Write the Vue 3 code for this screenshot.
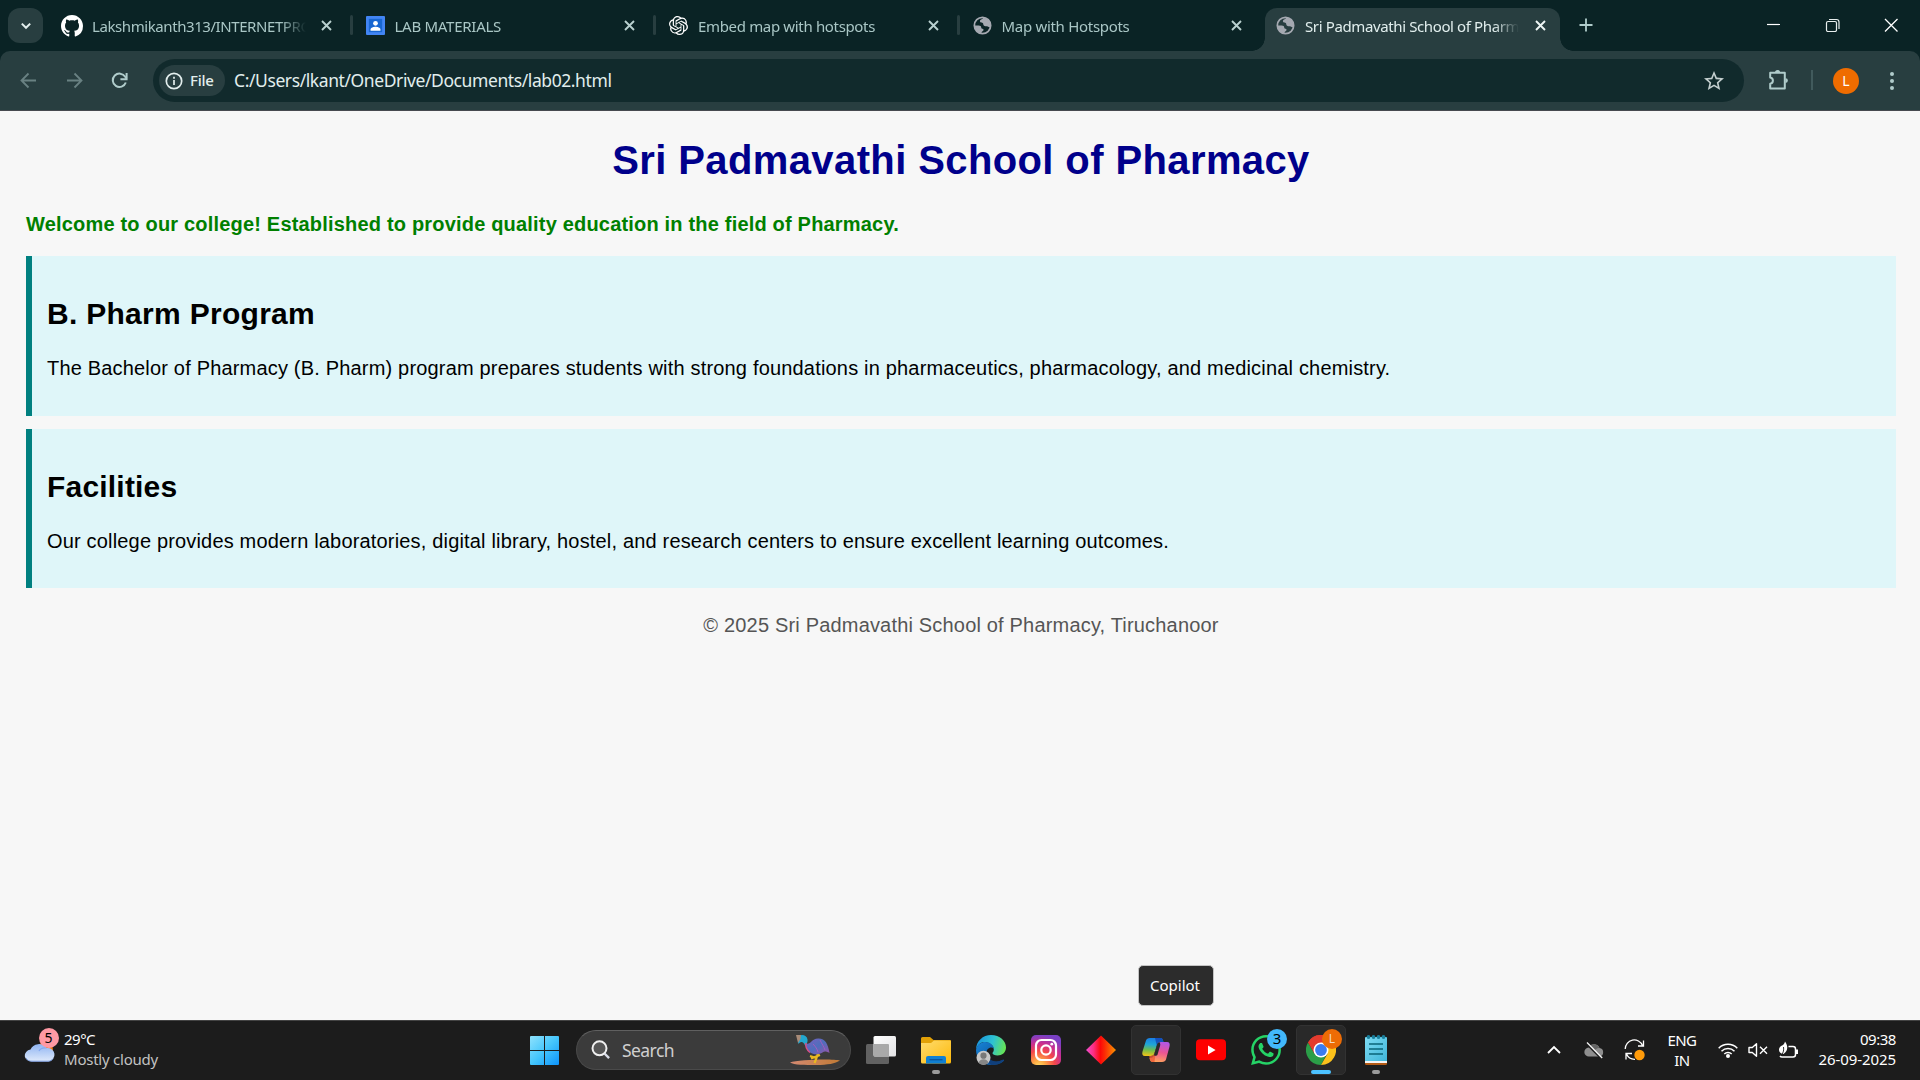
<script setup>
const tabs = [
  { title: 'Lakshmikanth313/INTERNETPROG', icon: 'github', ls: '-0.42px' },
  { title: 'LAB MATERIALS', icon: 'lab', ls: '-0.27px' },
  { title: 'Embed map with hotspots', icon: 'openai', ls: '-0.34px' },
  { title: 'Map with Hotspots', icon: 'globe', ls: '-0.3px' },
  { title: 'Sri Padmavathi School of Pharmacy', icon: 'globe', ls: '-0.38px', active: true },
]
const sections = [
  {
    title: 'B. Pharm Program',
    ls: '0.29px',
    text: 'The Bachelor of Pharmacy (B. Pharm) program prepares students with strong foundations in pharmaceutics, pharmacology, and medicinal chemistry.',
  },
  {
    title: 'Facilities',
    ls: '0.2px',
    text: 'Our college provides modern laboratories, digital library, hostel, and research centers to ensure excellent learning outcomes.',
  },
]
</script>

<template>
  <div class="screen">
    <header class="tabstrip">
      <div class="tab-search">
        <svg width="12" height="12" viewBox="0 0 12 12"><path d="M1.8 3.6 6 7.8l4.2-4.2" fill="none" stroke="#e3eeed" stroke-width="2" /></svg>
      </div>
      <div class="tabs">
        <div v-for="(t, i) in tabs" :key="i" class="tab" :class="{ active: t.active, sep: i < 3 }">
          <svg v-if="t.icon === 'github'" class="fav gh" viewBox="0 0 16 16"><path fill="#fff" d="M8 0C3.58 0 0 3.58 0 8c0 3.54 2.29 6.53 5.47 7.59.4.07.55-.17.55-.38 0-.19-.01-.82-.01-1.49-2.01.37-2.53-.49-2.69-.94-.09-.23-.48-.94-.82-1.13-.28-.15-.68-.52-.01-.53.63-.01 1.08.58 1.23.82.72 1.21 1.87.87 2.33.66.07-.52.28-.87.51-1.07-1.78-.2-3.64-.89-3.64-3.95 0-.87.31-1.59.82-2.15-.08-.2-.36-1.02.08-2.12 0 0 .67-.21 2.2.82.64-.18 1.32-.27 2-.27s1.36.09 2 .27c1.53-1.04 2.2-.82 2.2-.82.44 1.1.16 1.92.08 2.12.51.56.82 1.27.82 2.15 0 3.07-1.87 3.75-3.65 3.95.29.25.54.73.54 1.48 0 1.07-.01 1.93-.01 2.2 0 .21.15.46.55.38A8.01 8.01 0 0 0 16 8c0-4.42-3.58-8-8-8z" /></svg>
          <svg v-else-if="t.icon === 'lab'" class="fav" viewBox="0 0 20 20"><rect width="20" height="20" rx="1" fill="#4285f4" /><rect x="3" y="3" width="14" height="14" fill="#1967d2" /><circle cx="10" cy="7.7" r="2.5" fill="#fff" /><path d="M4.8 15.6v-1.3c0-2 3.4-2.9 5.200-2.900s5.200.9 5.200 2.900v1.300z" fill="#fff" /></svg>
          <svg v-else-if="t.icon === 'openai'" class="fav oa" viewBox="0 0 24 24"><path fill="#fff" d="M22.2819 9.8211a5.9847 5.9847 0 0 0-.5157-4.9108 6.0462 6.0462 0 0 0-6.5098-2.9A6.0651 6.0651 0 0 0 4.9807 4.1818a5.9847 5.9847 0 0 0-3.9977 2.9 6.0462 6.0462 0 0 0 .7427 7.0966 5.98 5.98 0 0 0 .511 4.9107 6.051 6.051 0 0 0 6.5146 2.9001A5.9847 5.9847 0 0 0 13.2599 24a6.0557 6.0557 0 0 0 5.7718-4.2058 5.9894 5.9894 0 0 0 3.9977-2.9001 6.0557 6.0557 0 0 0-.7475-7.073zm-9.022 12.6081a4.4755 4.4755 0 0 1-2.8764-1.0408l.1419-.0804 4.7783-2.7582a.7948.7948 0 0 0 .3927-.6813v-6.7369l2.02 1.1686a.071.071 0 0 1 .038.052v5.5826a4.504 4.504 0 0 1-4.4945 4.4944zm-9.6607-4.1254a4.4708 4.4708 0 0 1-.5346-3.0137l.142.0852 4.783 2.7582a.7712.7712 0 0 0 .7806 0l5.8428-3.3685v2.3324a.0804.0804 0 0 1-.0332.0615L9.74 19.9502a4.4992 4.4992 0 0 1-6.1408-1.6464zM2.3408 7.8956a4.485 4.485 0 0 1 2.3655-1.9728V11.6a.7664.7664 0 0 0 .3879.6765l5.8144 3.3543-2.0201 1.1685a.0757.0757 0 0 1-.071 0l-4.8303-2.7865A4.504 4.504 0 0 1 2.3408 7.872zm16.5963 3.8558L13.1038 8.364 15.1192 7.2a.0757.0757 0 0 1 .071 0l4.8303 2.7913a4.4944 4.4944 0 0 1-.6765 8.1042v-5.6772a.79.79 0 0 0-.407-.667zm2.0107-3.0231l-.142-.0852-4.7735-2.7818a.7759.7759 0 0 0-.7854 0L9.409 9.2297V6.8974a.0662.0662 0 0 1 .0284-.0615l4.8303-2.7866a4.4992 4.4992 0 0 1 6.6802 4.66zM8.3065 12.863l-2.02-1.1638a.0804.0804 0 0 1-.038-.0567V6.0742a4.4992 4.4992 0 0 1 7.3757-3.4537l-.142.0805L8.704 5.459a.7948.7948 0 0 0-.3927.6813zm1.0976-2.3654l2.602-1.4998 2.6069 1.4998v2.9994l-2.5974 1.4997-2.6067-1.4997Z" /></svg>
          <svg v-else class="fav" viewBox="0 0 20 20"><circle cx="10" cy="10" r="8.6" fill="none" stroke="#a5a9b1" stroke-width="1.8" /><path fill="#a5a9b1" d="M10.800 1.800C9.500 4 7.300 3.300 7.300 5.600c0 1.900 3.500 1 3.500 2.900 0 1.500 1.100 2.400 2.700 2.200 1.700-.2 2.300.5 4.600 1.300L18.600 9C18 5 15 2 10.800 1.800zM1.500 10h4.400c2 0 2.800.9 2.800 2.300 0 1.300 2.400.6 2.400 2.300 0 1.800-2 1.500-2.500 3.700C4.500 17.700 1.500 14.500 1.500 10z" /></svg>
          <span class="tab-title" :style="{ letterSpacing: t.ls }">{{ t.title }}</span>
          <svg class="close" width="11" height="11" viewBox="0 0 11 11"><path d="M1 1l9 9M10 1l-9 9" fill="none" stroke="currentColor" stroke-width="1.9" /></svg>
        </div>
      </div>
      <svg class="newtab" width="14" height="14" viewBox="0 0 14 14"><path d="M7 .5v13M.5 7h13" stroke="#b0cccb" stroke-width="1.8" /></svg>
      <div class="winctl">
        <svg width="15" height="15" viewBox="0 0 15 15"><path d="M1 7.500h13" stroke="#fff" stroke-width="1.200" /></svg>
        <svg width="15" height="15" viewBox="0 0 15 15"><rect x="1.500" y="4.500" width="10" height="10" rx="1.500" fill="none" stroke="#e8eeee" stroke-width="1.200" /><path d="M4 2.500h7.500a2.500 2.500 0 0 1 2.500 2.500v7" fill="none" stroke="#e8eeee" stroke-width="1.200" /></svg>
        <svg width="15" height="15" viewBox="0 0 15 15"><path d="M1 2l12.500 12.500M13.500 2L1 14.500" stroke="#fff" stroke-width="1.300" /></svg>
      </div>
    </header>

    <nav class="toolbar-wrap">
      <div class="toolbar">
        <div class="navs">
          <svg width="17" height="17" viewBox="0 0 17 17"><path d="M16 8.500H1.800M8.500 1.500l-7 7 7 7" fill="none" stroke="#698182" stroke-width="1.800" /></svg>
          <svg width="17" height="17" viewBox="0 0 17 17"><path d="M1 8.500h14.200M8.500 1.500l7 7-7 7" fill="none" stroke="#698182" stroke-width="1.800" /></svg>
          <svg width="17" height="17" viewBox="0 0 17 17"><path d="M14.800 10.500A6.700 6.700 0 1 1 14.200 4.800L15.500 6.500" fill="none" stroke="#b0cccb" stroke-width="2" /><path d="M15.600 1v6.200H9.400" fill="none" stroke="#b0cccb" stroke-width="2" /></svg>
        </div>
        <div class="omnibox">
          <div class="chip">
            <svg width="18" height="18" viewBox="0 0 18 18"><circle cx="9" cy="9" r="7.700" fill="none" stroke="#e3eeed" stroke-width="1.700" /><path d="M9 8v5M9 4.800v1.900" stroke="#e3eeed" stroke-width="1.700" /></svg>
            <span>File</span>
          </div>
          <span class="url">C:/Users/lkant/OneDrive/Documents/lab02.html</span>
          <svg class="star" width="20" height="20" viewBox="2 2 20 20"><path fill="#c4cfcf" d="M22 9.240l-7.190-.620L12 2 9.190 8.630 2 9.240l5.460 4.730L5.820 21 12 17.270 18.180 21l-1.630-7.030L22 9.240zM12 15.400l-3.760 2.270 1-4.280-3.320-2.880 4.380-.380L12 6.100l1.710 4.040 4.380.380-3.320 2.880 1 4.280L12 15.400z" /></svg>
        </div>
        <svg class="ext" width="22" height="22" viewBox="0 0 22 22"><path d="M3.500 3.700h13.300v15.800H2.200v-4.700c3.600-.3 3.600-6.100 0-6.400V3.700z" fill="none" stroke="#b0cccb" stroke-width="2" stroke-linejoin="round" /><path d="M7 3.500a2.600 2.600 0 0 1 5.200 0zM17.500 9.200a2.400 2.400 0 0 1 0 4.800z" fill="#b0cccb" /></svg>
        <i class="bar-sep"></i>
        <span class="avatar">L</span>
        <svg class="dots" width="6" height="20" viewBox="0 0 6 20"><g fill="#b0cccb"><circle cx="3" cy="3" r="2" /><circle cx="3" cy="10" r="2" /><circle cx="3" cy="17" r="2" /></g></svg>
      </div>
    </nav>

    <main class="page">
      <h1>Sri Padmavathi School of Pharmacy</h1>
      <p class="welcome">Welcome to our college! Established to provide quality education in the field of Pharmacy.</p>
      <section v-for="s in sections" :key="s.title">
        <h2 :style="{ letterSpacing: s.ls }">{{ s.title }}</h2>
        <p>{{ s.text }}</p>
      </section>
      <footer>© 2025 Sri Padmavathi School of Pharmacy, Tiruchanoor</footer>
    </main>

    <div class="tooltip">Copilot</div>

    <div class="taskbar">
      <div class="weather">
        <div class="w-icon">
          <svg width="34" height="32" viewBox="0 0 34 32">
            <defs><linearGradient id="cl" x1="0" y1="0" x2="0" y2="1"><stop offset="0" stop-color="#8fb4f2" /><stop offset="1" stop-color="#dfeafb" /></linearGradient></defs>
            <circle cx="22" cy="17" r="8" fill="#f27a12" />
            <path d="M9 28.500a7 6 0 0 1-1.500-11.900A9 8.500 0 0 1 23.500 15a7 6.800 0 0 1 2 13.500z" fill="url(#cl)" />
            <path d="M16 18c1.500-3 4.500-3.500 7.500-3" fill="none" stroke="#86aaf0" stroke-width="1.200" />
            <path d="M3 25c1.500 2.500 3.500 3.200 6 3.200h16c2.500 0 4-1 5-2.600" fill="none" stroke="#7b9fe4" stroke-width="1" />
          </svg>
          <b>5</b>
        </div>
        <div class="w-text"><span class="deg">29°C</span><span class="cond">Mostly cloudy</span></div>
      </div>

      <div class="center">
        <svg class="start" width="29" height="29" viewBox="0 0 29 29">
          <defs><linearGradient id="win" x1="0" y1="0" x2="1" y2="1"><stop offset="0" stop-color="#8fe2fd" /><stop offset=".5" stop-color="#45c6fc" /><stop offset="1" stop-color="#0d93fb" /></linearGradient></defs>
          <path fill="url(#win)" d="M1 0h13v14H0V1a1 1 0 0 1 1-1zM15 0h13a1 1 0 0 1 1 1v13H15zM0 15h14v14H1a1 1 0 0 1-1-1zM15 15h14v13a1 1 0 0 1-1 1H15z" />
        </svg>
        <div class="search">
          <svg width="20" height="20" viewBox="0 0 20 20"><circle cx="8.500" cy="8.300" r="7" fill="#565656" stroke="#f0f0f0" stroke-width="2" /><path d="M13.500 13.500l4.600 4.600" stroke="#dadde8" stroke-width="2.400" /></svg>
          <span>Search</span>
          <svg class="bird" width="52" height="34" viewBox="0 0 52 34">
            <defs>
              <linearGradient id="bd" x1="0" y1="0" x2="1" y2="1"><stop offset="0" stop-color="#7a5fc0" /><stop offset=".5" stop-color="#4f6ebc" /><stop offset="1" stop-color="#9a52a8" /></linearGradient>
              <linearGradient id="sand"><stop offset="0" stop-color="#d48a72" /><stop offset="1" stop-color="#c07a35" /></linearGradient>
            </defs>
            <path d="M1 29.500c8-3 43-4 50-2-5 3-12 4.500-24 4.500-11 0-22 0-26-2.500z" fill="url(#sand)" />
            <path d="M29 20l-1.500 5-2 5M31 22l-9 3.500M27 25l-6-2" fill="none" stroke="#e9b91f" stroke-width="2.200" />
            <path d="M17 10.500C22 12 22 6 29 5.500c7-.4 10 5 11.500 14.500-3-1.500-5-2-7-.5-4 2.500-9 2.500-13-.5-3-2.300-4.500-5.500-3.500-8.500z" fill="url(#bd)" />
            <path d="M10 2.500c4-1.500 8 0 8.500 4 .4 3.500-1.500 4.500-2 7-1-2-1.500-4-3.500-4.500-2-.4-2.500 1-3.500 2-1-2-.5-6 .5-8.500z" fill="#22a7cf" />
            <path d="M7 2l5 0-.5 4-2.500 4z" fill="#a88b78" />
            <path d="M17 10c-1 4 1 7 4 9.500" fill="none" stroke="#d84f86" stroke-width="1.500" />
            <path d="M24 11c3 3 4 5 5 8M31 7c2 4 4 7 5 10" fill="none" stroke="#a05cc0" stroke-width="1" />
          </svg>
        </div>

        <div class="apps">
          <div class="app">
            <svg width="30" height="30" viewBox="0 0 30 30"><defs><linearGradient id="tv" x1="0" y1="0" x2="1" y2="1"><stop offset="0" stop-color="#fff" /><stop offset="1" stop-color="#e2e2e4" /></linearGradient></defs><rect y="9" width="23" height="20" rx="1.500" fill="#616161" /><rect x="7.500" y="1" width="22.500" height="20.500" rx="1.500" fill="url(#tv)" /><path d="M7.500 9H22a1 1 0 0 1 1 1v11.500H9a1.500 1.500 0 0 1-1.500-1.500z" fill="#a9a9a9" /></svg>
          </div>
          <div class="app">
            <svg width="30" height="30" viewBox="0 0 30 30"><defs><linearGradient id="fo" x1="0" y1="0" x2="1" y2="1"><stop offset="0" stop-color="#ffdc6e" /><stop offset="1" stop-color="#fdb90a" /></linearGradient></defs><path d="M0 3.500A1.500 1.500 0 0 1 1.500 2H9l3.500 3H29a1 1 0 0 1 1 1v4H0z" fill="#e2a107" /><path d="M0 8h10l3-2.500h16A1 1 0 0 1 30 6.500V27a1.500 1.500 0 0 1-1.500 1.500h-27A1.500 1.500 0 0 1 0 27z" fill="url(#fo)" /><path d="M5 28.500V23a2 2 0 0 1 2-2h16a2 2 0 0 1 2 2v5.500z" fill="#1080d2" /><path d="M8.500 24.700h13" stroke="#0a549d" stroke-width="1.300" /></svg>
            <i class="dot"></i>
          </div>
          <div class="app">
            <svg width="30" height="30" viewBox="0 0 30 30">
              <defs>
                <linearGradient id="e1" x1="0" y1=".3" x2="1" y2=".5"><stop offset="0" stop-color="#1993dd" /><stop offset=".55" stop-color="#2ec2d2" /><stop offset="1" stop-color="#67e454" /></linearGradient>
                <linearGradient id="e2" x1="0" y1="0" x2="1" y2="1"><stop offset="0" stop-color="#1784d8" /><stop offset="1" stop-color="#0c4a8e" /></linearGradient>
              </defs>
              <path d="M0 15C0 6 7 0 15 0c9 0 15 6 15 12.500 0 5-4 8-8.500 8-3 0-5-1-5-2.200 0-1 1.300-1.500 1.300-3.800C17.800 11 14 7 8.500 7 4 7 1 11 0 15z" fill="url(#e1)" />
              <path d="M0 15C1 9 6 7 9 7c5.500 0 8.500 3.500 8.800 6.500C15 11 10 13.500 10.500 18.500c.4 6 6 8.500 10 8.300 3.500-.1 6-2 7-2 .8 0 .6.700.2 1.200C24.500 29 20 30 15 30 6.500 30 0 23.500 0 15z" fill="url(#e2)" />
              <path d="M10.500 18.500c.5 6 7 9 13 7.500 2-.5 3.500-1.500 4.500-1-3 4-8 5-13 5-4-3-5.500-7-4.500-11.500z" fill="#103f7b" />
              <circle cx="7.500" cy="22.700" r="7" fill="#c8c8c8" /><circle cx="7.500" cy="20.700" r="3.100" fill="#787878" /><path d="M2.800 28c.3-5 9.200-5 9.500 0-3 2.300-6.500 2.300-9.500 0z" fill="#868686" />
            </svg>
          </div>
          <div class="app">
            <svg width="30" height="30" viewBox="0 0 30 30">
              <defs>
                <radialGradient id="ig" cx=".27" cy="1.050" r="1.050"><stop offset="0" stop-color="#ffdc65" /><stop offset=".2" stop-color="#fdaa45" /><stop offset=".5" stop-color="#f4484a" /><stop offset=".75" stop-color="#c82f93" /><stop offset="1" stop-color="#7a40c4" /></radialGradient>
              </defs>
              <rect width="30" height="30" rx="5" fill="url(#ig)" /><rect x="5" y="5" width="20" height="20" rx="5.500" fill="none" stroke="#fff" stroke-width="2.200" /><circle cx="15" cy="15" r="4.700" fill="none" stroke="#fff" stroke-width="2.200" /><circle cx="20.800" cy="9.200" r="1.400" fill="#fff" />
            </svg>
          </div>
          <div class="app">
            <svg width="30" height="30" viewBox="0 0 30 30"><defs><linearGradient id="di"><stop offset="0" stop-color="#f04fd0" /><stop offset=".25" stop-color="#fb2e82" /><stop offset=".48" stop-color="#fc0808" /><stop offset=".62" stop-color="#fb2a05" /><stop offset="1" stop-color="#f99500" /></linearGradient></defs><path d="M15 .5 30 15 15 29.500 0 15z" fill="url(#di)" /></svg>
          </div>
          <div class="app hover">
            <svg width="30" height="30" viewBox="0 0 30 30">
              <defs>
                <linearGradient id="c1" x1=".3" y1="0" x2=".2" y2="1"><stop offset="0" stop-color="#1a7fe4" /><stop offset=".35" stop-color="#1fa6d8" /><stop offset=".65" stop-color="#6ebd4e" /><stop offset="1" stop-color="#f5c415" /></linearGradient>
                <linearGradient id="c2" x1=".6" y1="0" x2=".4" y2="1"><stop offset="0" stop-color="#b257e6" /><stop offset=".5" stop-color="#ea5593" /><stop offset="1" stop-color="#ffa25c" /></linearGradient>
              </defs>
              <path d="M9 3h10.500c2 0 2.300 1.500 3 4h-3c-2 0-3 1-3.700 3.500L13.500 18c-.5 2-1.500 3-3.500 3H4c-2.500 0-3.200-1.800-2.500-4.500L5 5.500C5.500 4 6.700 3 9 3z" fill="url(#c1)" />
              <path d="M14 3h5.500c2 0 2.300 1.500 3 4h-3c-2 0-3 1-3.700 3.500z" fill="#123fb0" opacity=".75" />
              <path d="M21 27H12c-2.500 0-3-1.500-3.500-4 3 0 4.200-1 5-3.500l2.700-9C17 8 18 7 20 7h6c2.500 0 3.200 1.800 2.500 4.500L25 24.500C24.500 26 23.300 27 21 27z" fill="url(#c2)" />
              <path d="M8.200 21c3.500 0 4.700-.5 5.500-3.200l1.300-4-1.500 13.200H12c-2.500 0-3-2-3.800-6z" fill="#ee5a35" opacity=".8" />
              <path d="M15.800 10.500 13 20c-.3 1 3 1 3.500-.3l2.600-9c.5-1.800 0-2.700-.6-3.500-1.500.3-2.200 1.500-2.700 3.300z" fill="#2a2a2a" />
            </svg>
          </div>
          <div class="app">
            <svg width="30" height="30" viewBox="0 0 30 30"><rect y="4.300" width="30" height="21" rx="4" fill="#fe0000" /><path d="M12 10.600 19.600 15 12 19.400z" fill="#fff" /></svg>
          </div>
          <div class="app">
            <svg width="30" height="30" viewBox="0 0 24 24"><path fill="#25d366" d="M17.472 14.382c-.297-.149-1.758-.867-2.030-.967-.273-.099-.471-.148-.670.150-.197.297-.767.966-.940 1.164-.173.199-.347.223-.644.075-.297-.150-1.255-.463-2.390-1.475-.883-.788-1.480-1.761-1.653-2.059-.173-.297-.018-.458.130-.606.134-.133.298-.347.446-.520.149-.174.198-.298.298-.497.099-.198.050-.371-.025-.520-.075-.149-.669-1.612-.916-2.207-.242-.579-.487-.500-.669-.510-.173-.008-.371-.010-.570-.010-.198 0-.520.074-.792.372-.272.297-1.040 1.016-1.040 2.479 0 1.462 1.065 2.875 1.213 3.074.149.198 2.096 3.200 5.077 4.487.709.306 1.262.489 1.694.625.712.227 1.360.195 1.871.118.571-.085 1.758-.719 2.006-1.413.248-.694.248-1.289.173-1.413-.074-.124-.272-.198-.570-.347m-5.421 7.403h-.004a9.870 9.870 0 01-5.031-1.378l-.361-.214-3.741.982.998-3.648-.235-.374a9.860 9.860 0 01-1.510-5.260c.001-5.450 4.436-9.884 9.888-9.884 2.640 0 5.122 1.030 6.988 2.898a9.825 9.825 0 012.893 6.994c-.003 5.450-4.437 9.884-9.885 9.884m8.413-18.297A11.815 11.815 0 0012.050 0C5.495 0 .160 5.335.157 11.892c0 2.096.547 4.142 1.588 5.945L.057 24l6.305-1.654a11.882 11.882 0 005.683 1.448h.005c6.554 0 11.890-5.335 11.893-11.893a11.821 11.821 0 00-3.480-8.413z" /></svg>
            <b class="badge blue">3</b>
          </div>
          <div class="app hover">
            <svg width="30" height="30" viewBox="0 0 30 30">
              <path d="M2 7.500A15 15 0 0 1 28 7.500L15 15z" fill="#e33b2e" /><path d="M2 7.500A15 15 0 0 0 15 30l6-11.500-12.500.2z" fill="#2b9e48" /><path d="M28 7.500A15 15 0 0 1 15 30l6.500-11.300L15 7.500z" fill="#fcc21b" /><path d="M2 7.500 8.500 18.700 15 7.500h13A15 15 0 0 0 2 7.500z" fill="#e33b2e" />
              <circle cx="15" cy="15" r="7.500" fill="#fff" /><circle cx="15" cy="15" r="5.900" fill="#3a7cf0" />
            </svg>
            <b class="badge orange">L</b>
            <i class="dot run"></i>
          </div>
          <div class="app">
            <svg width="30" height="30" viewBox="0 0 30 30"><defs><linearGradient id="np" x1="0" y1="0" x2="1" y2="1"><stop offset="0" stop-color="#7fdcf3" /><stop offset="1" stop-color="#3fb6da" /></linearGradient></defs><path d="M4 27h22v1.500a1.500 1.500 0 0 1-1.500 1.500h-19A1.500 1.500 0 0 1 4 28.500z" fill="#b35a14" /><path d="M4 24h22v4H4z" fill="#f3f3f3" /><path d="M4 3a1 1 0 0 1 1-1h20a1 1 0 0 1 1 1v23H4z" fill="url(#np)" /><path d="M8 9h14M8 14h14M8 19h14" stroke="#0a6478" stroke-width="1.700" /><g fill="#1a7f9c"><circle cx="7.500" cy="2" r="1.900" /><circle cx="12.500" cy="2" r="1.900" /><circle cx="17.500" cy="2" r="1.900" /><circle cx="22.500" cy="2" r="1.900" /></g></svg>
            <i class="dot"></i>
          </div>
        </div>
      </div>

      <div class="tray">
        <svg class="chev" width="14" height="9" viewBox="0 0 14 9"><path d="M1 8l6-6 6 6" fill="none" stroke="#fff" stroke-width="1.800" /></svg>
        <svg class="cloud" width="20" height="17" viewBox="0 0 20 17"><path d="M5 14.500a4.500 4.500 0 0 1-.3-9A6 6 0 0 1 15.500 6a4.300 4.300 0 0 1 0 8.500z" fill="#8f8f8f" /><path d="M5 5a6 6 0 0 1 10.500 1c-3 .2-4 1.500-5.500 3z" fill="#666" /><path d="M2 1.500 17 16.500" stroke="#1c1c1c" stroke-width="1.600" /><path d="M3 .5 18.200 16" stroke="#f4f4f4" stroke-width="1.300" /></svg>
        <svg class="sync" width="22" height="22" viewBox="0 0 22 22"><g fill="none" stroke="#fff" stroke-width="1.300"><path d="M1.200 10A9 9 0 0 1 18.500 6.500M19.500 1.500v5.500h-5.500M11 20.300A9 9 0 0 1 2.500 15M2 20.500V14.500h6" /></g><circle cx="15.500" cy="16" r="5.200" fill="#ff9b0a" /></svg>
        <div class="lang"><span>ENG</span><span>IN</span></div>
        <div class="sys">
          <svg width="20" height="16" viewBox="0 0 20 16"><g fill="none" stroke="#fff" stroke-width="1.500"><path d="M.7 6.200a13.200 13.200 0 0 1 18.600 0M3.500 9.300a9.200 9.200 0 0 1 13 0M6.300 12a5.200 5.200 0 0 1 7.400 0" /></g><circle cx="10" cy="14" r="2" fill="#fff" /></svg>
          <svg width="20" height="16" viewBox="0 0 20 16"><path d="M1 5.500h3.300L8.500 1.700v12.600L4.300 10.500H1z" fill="none" stroke="#fff" stroke-width="1.400" stroke-linejoin="round" /><path d="M12 4.700l7 7M19 4.700l-7 7" stroke="#fff" stroke-width="1.400" /></svg>
          <svg width="21" height="18" viewBox="0 0 21 18"><path d="M10.500 5.500H15a2.500 2.500 0 0 1 2.500 2.500v5.500A2.500 2.500 0 0 1 15 16H4a2.500 2.500 0 0 1-2-1" fill="none" stroke="#fff" stroke-width="1.500" /><path d="M18 8.500h2v4.500h-2z" fill="#fff" /><path d="M7 .5c3 4 3.500 9-1.500 12.500C-.5 12 0 6 4 4.500 5.500 4 6.500 2.500 7 .5z" fill="#fff" /><path d="M5.500 6c.5 3 0 5-2 8.500" stroke="#1c1c1c" stroke-width=".9" fill="none" /></svg>
        </div>
        <div class="clock"><span class="time">09:38</span><span class="date">26-09-2025</span></div>
      </div>
    </div>
  </div>
</template>

<style>
body { margin: 0; overflow: hidden; }
</style>

<style scoped>
.screen { position: relative; width: 1920px; height: 1080px; display: flex; flex-direction: column; overflow: hidden; background: #f7f7f7; font-family: 'Noto Sans', 'Open Sans', sans-serif; font-size: 15px; }
.screen svg { display: block; flex: none; }

.tabstrip { height: 51px; flex: none; display: flex; align-items: flex-start; background: #0a2325; }
.tab-search { width: 35px; height: 35px; margin: 8px 0 0 8px; border-radius: 12px; background: #283e40; display: flex; align-items: center; justify-content: center; }
.tabs { display: flex; margin-left: 8px; }
.tab { position: relative; box-sizing: border-box; width: 303.500px; height: 43px; margin-top: 8px; padding: 0 22px 8px 11px; display: flex; align-items: center; color: #a9c6c5; }
.tab.sep::after { content: ''; position: absolute; right: 2px; top: 7px; width: 3px; height: 20px; border-radius: 2px; background: #283e40; }
.tab.active { width: 295px; padding-right: 13px; background: #283e40; color: #e1eeed; border-radius: 12px 12px 0 0; }
.tab.active::before, .tab.active::after { content: ''; position: absolute; bottom: 0; width: 13px; height: 13px; }
.tab.active::before { left: -13px; background: radial-gradient(circle at 0 0, transparent 12.500px, #283e40 13px); }
.tab.active::after { right: -13px; background: radial-gradient(circle at 100% 0, transparent 12.500px, #283e40 13px); }
.fav { width: 19px; height: 19px; margin-right: 10px; }
.fav.gh { width: 22px; height: 22px; margin: 0 9px 0 -1px; }
.fav.oa { width: 19px; height: 19px; }
.tab-title { width: 214px; line-height: 22px; overflow: hidden; white-space: nowrap; -webkit-mask-image: linear-gradient(to right, #000 88%, transparent 100%); mask-image: linear-gradient(to right, #000 88%, transparent 100%); }
.close { margin-left: auto; color: #b9d0cf; position: relative; left: -1px; }
.active .close { color: #eef5f4; }
.newtab { margin: 18px 0 0 19px; }
.winctl { display: flex; gap: 44px; margin: 17px 21px 0 auto; }

.toolbar-wrap { flex: none; height: 60px; background: #0a2325; }
.toolbar { box-sizing: border-box; height: 60px; padding-left: 20px; display: flex; align-items: flex-start; background: #283e40; border-radius: 10px 10px 0 0; border-bottom: 1px solid #474a50; }
.navs { display: flex; gap: 28.500px; margin-top: 21px; width: 133px; }
.omnibox { width: 1591px; height: 43px; margin-top: 8px; border-radius: 22px; background: #112a2c; display: flex; align-items: center; }
.chip { box-sizing: border-box; width: 66px; height: 31px; margin-left: 6px; padding-left: 6px; border-radius: 16px; background: #283e40; display: flex; align-items: center; gap: 7px; color: #e3eeed; font-weight: 500; letter-spacing: -0.280px; }
.chip span { margin-top: -2px; }
.url { margin: -2px 0 0 9px; font-size: 17.500px; line-height: 24px; letter-spacing: -0.410px; color: #e1eeed; white-space: nowrap; }
.star { margin: 0 20px 0 auto; }
.ext { margin: 18px 0 0 24px; }
.bar-sep { width: 2px; height: 20px; margin: 19px 0 0 21px; background: #415a5c; }
.avatar { width: 26px; height: 26px; margin: 17px 0 0 20px; border-radius: 50%; background: #ef6c00; color: #fff; text-align: center; line-height: 26px; font-size: 14px; }
.dots { margin: 20px 0 0 30px; }

.page { flex: 1; padding: 26px 24px 0 26px; font-family: 'Liberation Sans', Arial, sans-serif; font-size: 20px; line-height: 23px; letter-spacing: 0.181px; color: #000; }
.page h1 { margin: 0; height: 46px; font-size: 40px; line-height: 46px; letter-spacing: 0.390px; text-align: center; color: #00008b; }
.page p { margin: 0; white-space: nowrap; }
.page .welcome { margin: 30px 0 20px; font-weight: bold; color: #008000; letter-spacing: 0.188px; }
.page section { box-sizing: border-box; height: 160px; margin-bottom: 13px; padding: 41px 15px 0; border-left: 6px solid #008080; background: #dff6f9; }
.page section + section { height: 159px; padding-top: 41px; }
.page section + section p { letter-spacing: 0.173px; }
.page h2 { margin: 0 0 26px; font-size: 30px; line-height: 34px; }
.page footer { margin-top: 26px; text-align: center; color: #555; }

.tooltip { position: absolute; left: 1138px; top: 965px; box-sizing: border-box; width: 76px; height: 41px; padding-right: 2px; border: 1px solid #c4c4c4; border-radius: 5px; background: #2c2c2c; color: #fff; text-align: center; line-height: 38px; font-size: 15px; }

.taskbar { position: relative; flex: none; box-sizing: border-box; height: 60px; display: flex; align-items: flex-start; background: #1c1c1c; border-top: 1px solid #434343; color: #fff; }
.weather { display: flex; width: 530px; }
.w-icon { position: relative; margin: 12px 0 0 23px; width: 41px; }
.w-icon b { position: absolute; left: 15.500px; top: -5px; width: 20px; height: 20px; border-radius: 50%; background: #ff99a4; color: #000; font-weight: 400; font-size: 14px; line-height: 20px; text-align: center; }
.w-text, .lang, .clock { display: flex; flex-direction: column; line-height: 20px; white-space: nowrap; }
.w-text { margin-top: 8px; }
.deg { letter-spacing: -0.500px; }
.cond { letter-spacing: -0.230px; color: #c2c2c2; }
.center { display: flex; }
.start { margin-top: 15px; }
.search { box-sizing: border-box; width: 275px; height: 40px; margin: 9px 0 0 17px; padding: 0 9px 0 14px; display: flex; align-items: center; border-radius: 20px; border: 1px solid #4a4a4a; border-top-color: #606060; background: #3b3b3b; color: #cfcfcf; font-size: 17.500px; letter-spacing: -0.560px; }
.search span { margin-left: 11px; }
.bird { margin-left: auto; }
.apps { display: flex; gap: 5px; margin: 4px 0 0 5px; }
.app { position: relative; box-sizing: border-box; width: 50px; height: 50px; padding: 10px; border-radius: 5px; }
.app.hover { padding: 9px; border: 1px solid #323232; background: #292929; }
.dot { position: absolute; left: 21px; bottom: 1px; width: 8px; height: 4px; border-radius: 2px; background: #9a9a9a; }
.dot.run { left: 14px; bottom: 0; width: 20px; background: #4cc2ff; }
.badge { position: absolute; left: 26px; top: 4px; width: 20px; height: 20px; border-radius: 50%; font-weight: 400; font-size: 15px; line-height: 19px; text-align: center; }
.blue { background: #42b8fb; color: #000; }
.orange { left: 25px; top: 3px; background: #ed6c05; color: #f4d9c3; font-size: 12px; line-height: 20px; }
.tray { position: absolute; right: 24px; top: 0; display: flex; align-items: flex-start; }
.chev { margin: 24px 23px 0 0; }
.cloud { margin: 21px 20px 0 0; }
.sync { margin: 18px 0 0; }
.lang { width: 30px; margin: 9px 21px 0 21px; text-align: center; letter-spacing: -0.600px; }
.sys { display: flex; gap: 10px; align-items: center; margin-top: 20px; }
.clock { width: 97px; margin-top: 8px; text-align: right; }
.time { letter-spacing: -0.460px; }
.date { letter-spacing: -0.080px; }
</style>
